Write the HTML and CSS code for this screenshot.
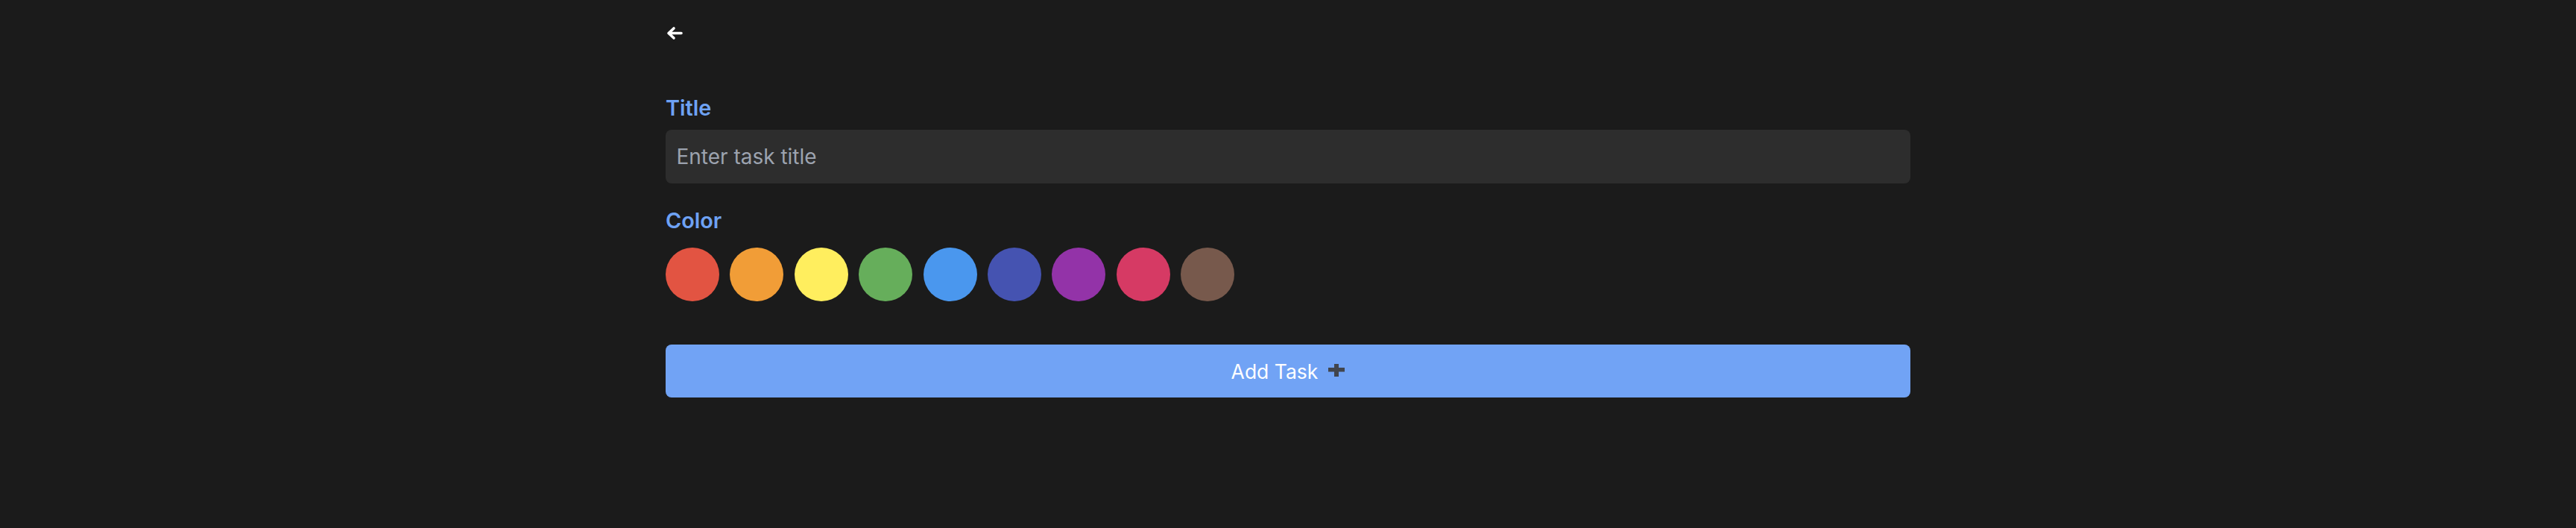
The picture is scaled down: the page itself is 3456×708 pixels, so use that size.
FILE: index.html
```html
<!DOCTYPE html>
<html lang="en">
<head>
<meta charset="utf-8">
<title>Add Task</title>
<link rel="stylesheet" href="styles.css">
</head>
<body>
<main class="page">
  <button class="back" aria-label="Back">
    <svg class="back-icon" viewBox="0 0 22 19" width="22" height="19">
      <path d="M20 9.5H3.5M10 3L3 9.5L10 16" fill="none" stroke="#ffffff" stroke-width="3.6" stroke-linecap="round" stroke-linejoin="round"/>
    </svg>
  </button>

  <form class="form">
    <label class="label" for="title">Title</label>
    <input class="input" id="title" type="text" placeholder="Enter task title">

    <div class="label label-color">Color</div>
    <div class="swatches">
      <span class="swatch red"></span>
      <span class="swatch orange"></span>
      <span class="swatch yellow"></span>
      <span class="swatch green"></span>
      <span class="swatch blue"></span>
      <span class="swatch indigo"></span>
      <span class="swatch purple"></span>
      <span class="swatch pink"></span>
      <span class="swatch brown"></span>
    </div>

    <button class="submit" type="button">
      <span>Add Task</span>
      <svg class="plus" viewBox="0 0 22 17" width="22" height="17">
        <rect x="0" y="5" width="22" height="5.5" fill="#41454d"/>
        <rect x="8" y="0" width="6" height="17" fill="#41454d"/>
      </svg>
    </button>
  </form>
</main>
</body>
</html>
```
FILE: styles.css
```css
html, body {
  margin: 0;
  padding: 0;
  background: #1b1b1b;
  height: 100%;
}

body {
  font-family: Inter, "Noto Sans", "Liberation Sans", sans-serif;
  color: #ffffff;
}

.page {
  max-width: 1670px;
  margin: 0 auto;
  padding-top: 35px;
}

.back {
  display: block;
  background: none;
  border: 0;
  padding: 0 0 0 1px;
  margin: 0;
  height: 19px;
  cursor: pointer;
}

.back-icon {
  display: block;
}

.form {
  display: flex;
  flex-direction: column;
  padding-top: 74px;
}

.label {
  font-size: 28.8px;
  line-height: 34.6px;
  font-weight: 600;
  color: #6ea2f4;
}

.input {
  margin-top: 11.5px;
  height: 72px;
  box-sizing: border-box;
  border: 0;
  border-radius: 8px;
  background: #2d2d2d;
  padding: 0 14.4px;
  font-family: inherit;
  font-size: 28px;
  color: #ffffff;
  outline: none;
}

.input::placeholder {
  color: #9ca3af;
}

.label-color {
  margin-top: 33px;
}

.swatches {
  display: flex;
  gap: 14.4px;
  margin-top: 18.5px;
}

.swatch {
  width: 72px;
  height: 72px;
  border-radius: 50%;
  flex: none;
}

.red { background: #e25442; }
.orange { background: #f19d37; }
.yellow { background: #ffee5e; }
.green { background: #66ae5b; }
.blue { background: #4a97ee; }
.indigo { background: #4553b1; }
.purple { background: #9333a8; }
.pink { background: #d63a64; }
.brown { background: #77594c; }

.submit {
  margin-top: 58px;
  height: 71px;
  border: 0;
  border-radius: 8px;
  background: #71a3f5;
  color: #ffffff;
  font-family: inherit;
  font-size: 26.5px;
  display: flex;
  align-items: center;
  justify-content: center;
  gap: 14px;
  cursor: pointer;
}

.plus {
  display: block;
  flex: none;
  margin-top: -2px;
}
```
